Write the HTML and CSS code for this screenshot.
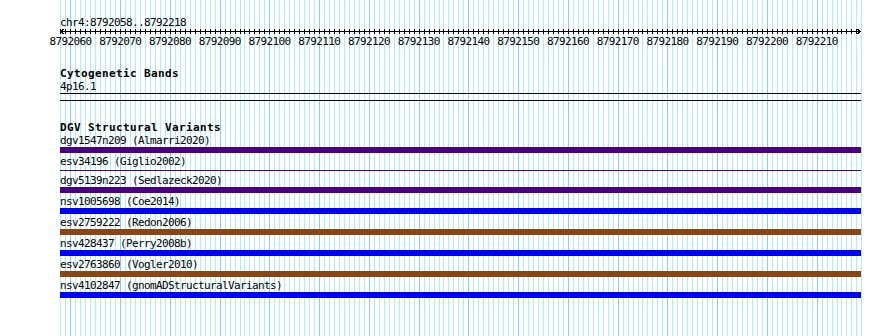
FILE: index.html
```html
<!DOCTYPE html>
<html lang="en">
<head>
    <meta charset="UTF-8">
    <meta name="viewport" content="width=device-width, initial-scale=1.0">
    <title>chr4:8792058..8792218</title>

    <link rel="stylesheet" href="styles.css">
</head>
<body>
    <div class="browser">
        <svg class="grid" id="grid" width="802" height="336"></svg>

        <main class="tracks">
            <section class="ruler">
                <p class="ruler-title">chr4:8792058..8792218</p>
                <svg class="axis" id="axis" width="802" height="6"></svg>
                <div class="ruler-labels">
                    <span>8792060</span>
                    <span>8792070</span>
                    <span>8792080</span>
                    <span>8792090</span>
                    <span>8792100</span>
                    <span>8792110</span>
                    <span>8792120</span>
                    <span>8792130</span>
                    <span>8792140</span>
                    <span>8792150</span>
                    <span>8792160</span>
                    <span>8792170</span>
                    <span>8792180</span>
                    <span>8792190</span>
                    <span>8792200</span>
                    <span>8792210</span>
                </div>
            </section>

            <section class="track">
                <h2 class="track-title">Cytogenetic Bands</h2>
                <p class="label">4p16.1</p>
                <div class="band"></div>
            </section>

            <section class="track track-dgv">
                <h2 class="track-title">DGV Structural Variants</h2>
                <div class="feature">
                    <p class="label">dgv1547n209 (Almarri2020)</p>
                    <div class="bar indigo"></div>
                </div>
                <div class="feature">
                    <p class="label">esv34196 (Giglio2002)</p>
                    <div class="bar thin indigo"></div>
                </div>
                <div class="feature">
                    <p class="label">dgv5139n223 (Sedlazeck2020)</p>
                    <div class="bar indigo"></div>
                </div>
                <div class="feature">
                    <p class="label">nsv1005698 (Coe2014)</p>
                    <div class="bar blue"></div>
                </div>
                <div class="feature">
                    <p class="label">esv2759222 (Redon2006)</p>
                    <div class="bar brown"></div>
                </div>
                <div class="feature">
                    <p class="label">nsv428437 (Perry2008b)</p>
                    <div class="bar blue"></div>
                </div>
                <div class="feature">
                    <p class="label">esv2763860 (Vogler2010)</p>
                    <div class="bar brown"></div>
                </div>
                <div class="feature">
                    <p class="label">nsv4102847 (gnomADStructuralVariants)</p>
                    <div class="bar blue"></div>
                </div>
            </section>
        </main>
    </div>

    <script>
        const d = document,
        ns = "http://www.w3.org/2000/svg",
        start = 8792058,
        end = 8792218,
        bp = 801 / (end - start + 1),
        $grid = d.getElementById("grid"),
        $axis = d.getElementById("axis");

        const draw = (svg, tag, attrs) => {
            const el = d.createElementNS(ns, tag);
            for (const key in attrs) el.setAttribute(key, attrs[key]);
            svg.appendChild(el);
        };

        // one grid line per base, a darker one every 10 bases
        for (let i = 0; i <= end - start + 1; i++) {
            const x = Math.floor(i * bp + 0.9) + 0.5;
            const major = (start + i) % 10 === 0;
            draw($grid, "line", {x1: x, y1: 0, x2: x, y2: 336, stroke: major ? "#87cefa" : "#afeeee"});
            if (i <= end - start) draw($axis, "line", {x1: x, y1: 0, x2: x, y2: 5, stroke: "#000"});
        }

        draw($axis, "line", {x1: 0, y1: 2.5, x2: 801, y2: 2.5, stroke: "#000"});
        draw($axis, "polyline", {points: "4,0 0.5,2.5 4,5", fill: "none", stroke: "#000"});
        draw($axis, "polyline", {points: "797,0 800.5,2.5 797,5", fill: "none", stroke: "#000"});
    </script>
</body>
</html>
```

FILE: styles.css
```css
*,
*::after,
*::before{
    box-sizing: border-box;
    margin: 0;
    padding: 0;
}
body{
    background-color: #fff;
    color: #000;
    font-family: "DejaVu Sans Mono", "Liberation Mono", monospace;
    font-size: 11px;
    line-height: 13px;
    letter-spacing: -0.62px;
}
.browser{
    position: relative;
    width: 890px;
    height: 336px;
    overflow: hidden;
}
/*la rejilla queda debajo de las pistas*/
.grid{
    position: absolute;
    top: 0;
    left: 60px;
    shape-rendering: crispEdges;
}
.tracks{
    position: relative;
    width: 801px;
    margin-left: 60px;
    padding-top: 16px;
}
.axis{
    display: block;
    shape-rendering: crispEdges;
}
.ruler-labels{
    display: flex;
    margin-left: -14.4px;
}
.ruler-labels span{
    flex: none;
    width: 49.75px;
    text-align: center;
}
.track{
    margin-top: 20px;
}
.track-dgv{
    margin-top: 21px;
}
.track-title{
    font-size: 11px;
    font-weight: bold;
    line-height: 12px;
    letter-spacing: 0.38px;
}
.band{
    height: 8px;
    border-top: 1px solid #000;
    border-bottom: 1px solid #000;
}
.feature{
    margin-bottom: 2px;
}
.bar{
    height: 6px;
}
.bar.thin{
    height: 1px;
    margin: 2px 0 3px;
}
.indigo{
    background-color: #4b0082;
}
.blue{
    background-color: #0000ff;
}
.brown{
    background-color: #8b4513;
}
```
